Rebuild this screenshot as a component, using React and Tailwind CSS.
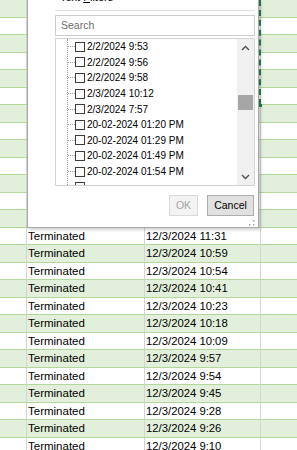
import React from 'react';

const dates = [
  '12/3/2024 11:31',
  '12/3/2024 10:59',
  '12/3/2024 10:54',
  '12/3/2024 10:41',
  '12/3/2024 10:23',
  '12/3/2024 10:18',
  '12/3/2024 10:09',
  '12/3/2024 9:57',
  '12/3/2024 9:54',
  '12/3/2024 9:45',
  '12/3/2024 9:28',
  '12/3/2024 9:26',
  '12/3/2024 9:10',
];

const filterItems = [
  '2/2/2024 9:53',
  '2/2/2024 9:56',
  '2/2/2024 9:58',
  '2/3/2024 10:12',
  '2/3/2024 7:57',
  '20-02-2024 01:20 PM',
  '20-02-2024 01:29 PM',
  '20-02-2024 01:49 PM',
  '20-02-2024 01:54 PM',
  '',
];

function SheetRow({ index }) {
  const banded = index % 2 === 0;
  const dataIndex = index - 13;
  const hasData = dataIndex >= 0 && dataIndex < dates.length;
  return (
    <div
      className={`grid h-[17.5px] grid-cols-[27px_118px_116px_1fr] border-b border-[#b4d79c] ${
        banded ? 'bg-[#e2efda]' : 'bg-white'
      }`}
    >
      <div className="border-r border-[#d4d4d4]" />
      <div className="flex items-center border-r border-[#d4d4d4] pl-[1px] text-[11.5px] text-black">
        {hasData ? 'Terminated' : ''}
      </div>
      <div className="flex items-center border-r border-[#d4d4d4] pl-[1px] text-[11.3px] text-black">
        {hasData ? dates[dataIndex] : ''}
      </div>
      <div />
    </div>
  );
}

function Chevron({ up }) {
  return (
    <svg width="9" height="6" viewBox="0 0 9 6">
      <polyline
        points={up ? '1,5 4.5,1.5 8,5' : '1,1 4.5,4.5 8,1'}
        fill="none"
        stroke="#505050"
        strokeWidth="1.4"
      />
    </svg>
  );
}

function FilterDialog() {
  return (
    <div className="absolute left-[27px] top-0 flex h-[228px] w-[232px] flex-col border-b border-l border-r border-[#a8a8a8] bg-white pl-[27px] pr-[3px] shadow-[2px_2px_3px_rgba(0,0,0,0.18)]">
      {/* menu item cut at the top edge */}
      <div className="h-[11px] overflow-hidden border-b border-[#e1e1e1]">
        <div className="-mt-[9px] pl-[5px] text-[11px] leading-[13px] text-black">
          Text <span className="underline">F</span>ilters
        </div>
      </div>

      <div className="mt-[4px] flex h-[21px] items-center border border-[#cdcdcd] pl-[5px] text-[10.5px] text-[#6d6d6d]">
        Search
      </div>

      <div className="mt-[2px] flex h-[148px] border border-[#d2d2d2]">
        <div className="flex-1 overflow-hidden">
          <div className="ml-[11px] h-full border-l border-dotted border-[#9a9a9a]">
            {filterItems.map((item, i) => (
              <div key={i} className="flex h-[15.6px] items-center">
                <div className="w-[7px] border-t border-dotted border-[#9a9a9a]" />
                <div className="h-[10px] w-[10px] shrink-0 border border-[#3c3c3c] bg-white" />
                <span className="ml-[2px] whitespace-nowrap text-[10px] text-black">{item}</span>
              </div>
            ))}
          </div>
        </div>
        <div className="flex w-[17px] flex-col bg-[#f0f0f0]">
          <div className="flex h-[17px] items-center justify-center">
            <Chevron up />
          </div>
          <div className="mx-[1px] mt-[39px] h-[15px] bg-[#a6a6a6]" />
          <div className="flex-1" />
          <div className="flex h-[17px] items-center justify-center">
            <Chevron />
          </div>
        </div>
      </div>

      <div className="mt-[9px] flex h-[21px] justify-end gap-[9px] pr-[1px]">
        <div className="flex w-[29px] items-center justify-center border border-[#d9d9d9] bg-[#f3f3f3] text-[10.5px] text-[#a3a3a3]">
          OK
        </div>
        <div className="flex w-[47px] items-center justify-center border border-[#adadad] bg-[#e1e1e1] text-[10.5px] text-black">
          Cancel
        </div>
      </div>

      <div className="flex flex-1 items-end justify-end pb-[1px]">
        <svg width="6" height="6" viewBox="0 0 6 6">
          <rect x="4" y="0" width="1.5" height="1.5" fill="#a0a0a0" />
          <rect x="4" y="4" width="1.5" height="1.5" fill="#a0a0a0" />
          <rect x="0" y="4" width="1.5" height="1.5" fill="#a0a0a0" />
        </svg>
      </div>
    </div>
  );
}

export default function App() {
  return (
    <div className="relative h-[450px] w-[297px] overflow-hidden bg-white font-['Liberation_Sans',Arial,sans-serif]">
      {Array.from({ length: 26 }, (_, i) => (
        <SheetRow key={i} index={i} />
      ))}
      <FilterDialog />
      {/* copy marquee on the column edge */}
      <div className="absolute left-[259px] top-0 h-[105px] border-l-2 border-dashed border-[#217346]" />
      <div className="absolute left-[259px] top-[104px] h-[3px] w-[3px] bg-[#217346]" />
    </div>
  );
}
